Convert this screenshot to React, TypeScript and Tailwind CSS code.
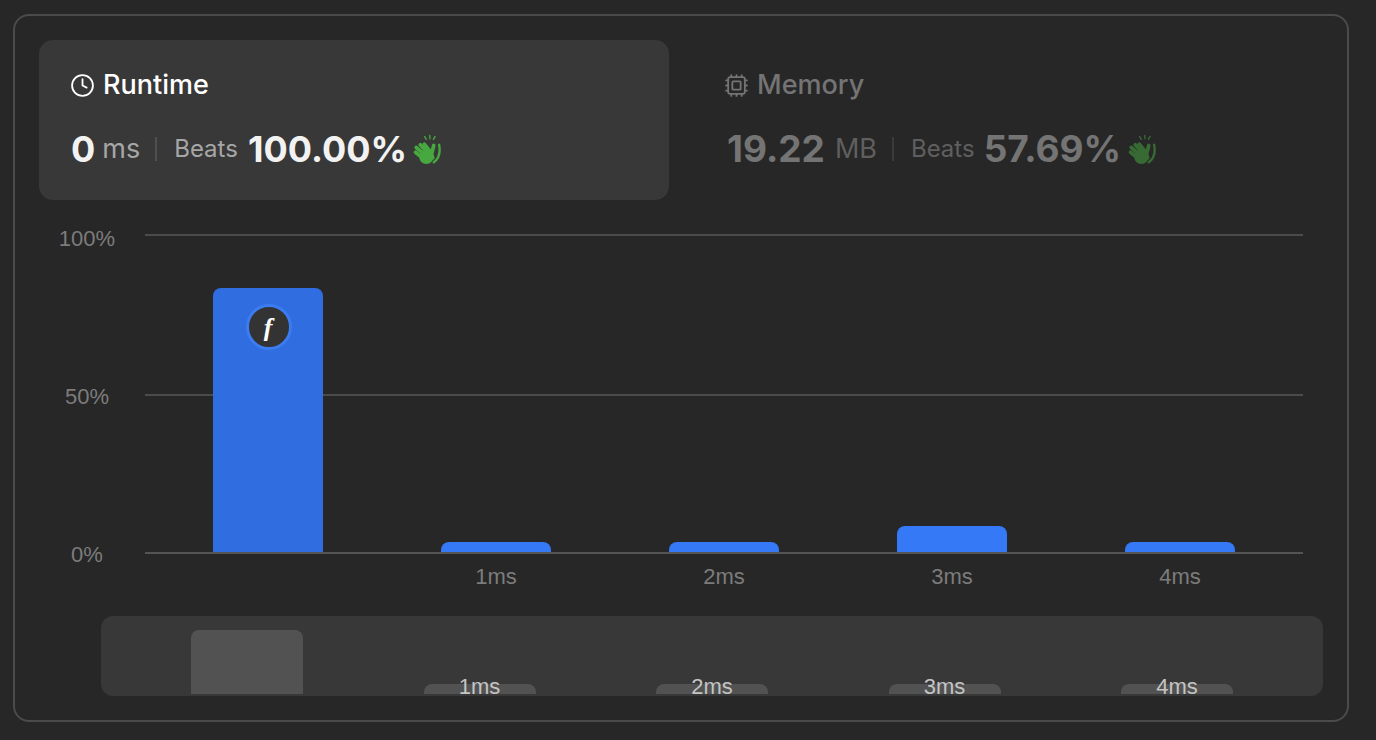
import { Clock, Cpu } from "lucide-react";

const bars = [
  { label: "", height: "h-[264px]", color: "bg-[#2f6de1]" },
  { label: "1ms", height: "h-[10px]", color: "bg-[#3579f6]" },
  { label: "2ms", height: "h-[10px]", color: "bg-[#3579f6]" },
  { label: "3ms", height: "h-[26px]", color: "bg-[#3579f6]" },
  { label: "4ms", height: "h-[10px]", color: "bg-[#3579f6]" },
];

const brushBars = [
  { label: "", height: "h-[64px]" },
  { label: "1ms", height: "h-[10px]" },
  { label: "2ms", height: "h-[10px]" },
  { label: "3ms", height: "h-[10px]" },
  { label: "4ms", height: "h-[10px]" },
];

function Clap({ color }: { color: string }) {
  return (
    <svg width="30" height="31" viewBox="10 10 84 92" fill="none" stroke={color} strokeLinecap="round">
      <g strokeWidth="11">
        <path d="M18 64 40 82" />
        <path d="M20 50 46 72" />
        <path d="M32 42 54 66" />
        <path d="M44 40 60 60" />
        <path d="M72 44 67 64" />
      </g>
      <circle cx="50" cy="78" r="21" fill={color} stroke="none" />
      <path d="M62 62 68 80" strokeWidth="13" />
      <path d="M88 42C92 62 88 82 72 94" strokeWidth="7" />
      <g strokeWidth="4">
        <path d="M45 18 50 26" />
        <path d="M60 14 61 24" />
        <path d="M76 17 71 26" />
      </g>
    </svg>
  );
}

function App() {
  return (
    <div className="h-[740px] w-[1376px] overflow-hidden bg-[#272727] pl-[13px] pt-[14px] font-['Inter',sans-serif]">
      <div className="h-[708px] w-[1336px] rounded-2xl border-2 border-[#4b4b4b] p-6">
        <div className="flex gap-6">
          <div className="flex h-40 w-[630px] flex-col rounded-[14px] bg-[#383838] px-8 pt-[26px]">
            <div className="flex h-[38px] items-center gap-2 text-[27px] font-medium text-white">
              <Clock size={25} strokeWidth={1.75} className="-ml-px" />
              Runtime
            </div>
            <div className="mt-[26px] flex h-[38px] items-center">
              <span className="text-[36px] font-bold text-[#f2f2f2]">0</span>
              <span className="ml-[7px] text-[27px] text-[#a6a6a6]">ms</span>
              <span className="ml-[15px] mr-[17px] h-6 w-0.5 bg-[#4f4f4f]" />
              <span className="text-[24px] text-[#a6a6a6]">Beats</span>
              <span className="ml-[10px] text-[36px] font-bold text-[#f2f2f2]">100.00%</span>
              <span className="ml-[5px]">
                <Clap color="#46a83f" />
              </span>
            </div>
          </div>
          <div className="flex h-40 flex-col px-8 pt-[26px]">
            <div className="flex h-[38px] items-center gap-2 text-[27px] font-medium text-[#747474]">
              <Cpu size={25} strokeWidth={1.75} className="-ml-px" />
              Memory
            </div>
            <div className="mt-[26px] flex h-[38px] items-center">
              <span className="ml-0.5 text-[37px] font-bold text-[#747474]">19.22</span>
              <span className="ml-[10px] text-[27px] text-[#5f5f5f]">MB</span>
              <span className="ml-[15px] mr-[17px] h-6 w-0.5 bg-[#3a3a3a]" />
              <span className="text-[24px] text-[#5f5f5f]">Beats</span>
              <span className="ml-[9px] text-[37px] font-bold text-[#747474]">57.69%</span>
              <span className="ml-[6px]">
                <Clap color="#386b33" />
              </span>
            </div>
          </div>
        </div>

        <div className="mt-6 flex font-['Liberation_Sans',sans-serif]">
          <div className="flex h-[345px] w-24 flex-col justify-between pt-px text-center text-[22px] leading-7 text-[#7c7c7c]">
            <span>100%</span>
            <span>50%</span>
            <span>0%</span>
          </div>
          <div className="ml-[10px] w-[1158px] pt-[10px]">
            <div className="relative h-[320px] border-y-2 border-t-[#4b4b4b] border-b-[#545454]">
              <div className="absolute inset-x-0 top-[158px] h-0.5 bg-[#4b4b4b]" />
              <div className="relative flex h-full items-end px-[9px]">
                {bars.map((bar, i) => (
                  <div key={i} className="flex w-[228px] justify-center">
                    <div className={`${bar.height} ${bar.color} w-[110px] rounded-t-lg`}>
                      {i === 0 && (
                        <div className="ml-[33px] mt-[16px] flex h-[46px] w-[46px] items-center justify-center rounded-full border-[3px] border-[#3b7df0] bg-[#333333] pr-0.5 font-['Liberation_Serif',serif] text-[26px] font-bold italic text-white">
                          f
                        </div>
                      )}
                    </div>
                  </div>
                ))}
              </div>
            </div>
            <div className="mt-[9px] flex px-[9px]">
              {bars.map((bar, i) => (
                <div key={i} className="h-7 w-[228px] text-center text-[22px] leading-7 text-[#7c7c7c]">
                  {bar.label}
                </div>
              ))}
            </div>
          </div>
        </div>

        <div className="ml-[62px] mt-[25px] flex h-20 w-[1222px] items-end justify-between rounded-xl bg-[#383838] px-[90px] pb-0.5 font-['Liberation_Sans',sans-serif]">
          {brushBars.map((bar, i) => (
            <div key={i} className={`${bar.height} relative w-[112px] rounded-t-lg bg-[#525252]`}>
              {bar.label && (
                <span className="absolute -bottom-[5px] inset-x-0 text-center text-[22px] leading-6 text-[#c4c4c4]">
                  {bar.label}
                </span>
              )}
            </div>
          ))}
        </div>
      </div>
    </div>
  );
}

export default App;
